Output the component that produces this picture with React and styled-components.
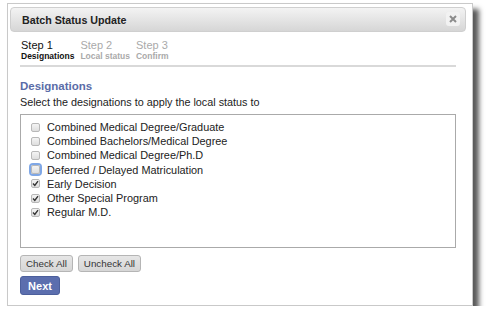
import { createGlobalStyle, styled } from "styled-components";

const designations = [
  { label: "Combined Medical Degree/Graduate", checked: false },
  { label: "Combined Bachelors/Medical Degree", checked: false },
  { label: "Combined Medical Degree/Ph.D", checked: false },
  { label: "Deferred / Delayed Matriculation", checked: false, focused: true },
  { label: "Early Decision", checked: true },
  { label: "Other Special Program", checked: true },
  { label: "Regular M.D.", checked: true },
];

const steps = [
  { num: "Step 1", name: "Designations", active: true },
  { num: "Step 2", name: "Local status" },
  { num: "Step 3", name: "Confirm" },
];

function App() {
  return (
    <>
      <GlobalStyle />
      <Dialog>
        <TitleBar>
          Batch Status Update
          <Close>
            <svg width="8" height="8" viewBox="0 0 8 8">
              <path d="M1 1 L7 7 M7 1 L1 7" stroke="#8c8c8c" strokeWidth="2" />
            </svg>
          </Close>
        </TitleBar>
        <Body>
          <Steps>
            {steps.map((s) => (
              <Step key={s.num} $active={s.active}>
                <StepNum>{s.num}</StepNum>
                <StepName>{s.name}</StepName>
              </Step>
            ))}
          </Steps>
          <Divider />
          <Heading>Designations</Heading>
          <Intro>Select the designations to apply the local status to</Intro>
          <ListBox>
            {designations.map((d) => (
              <Row key={d.label}>
                <Box $focused={d.focused}>
                  {d.checked && (
                    <svg width="7" height="7" viewBox="0 0 7 7">
                      <path d="M1 3.6 L2.8 5.4 L6 1.2" fill="none" stroke="#333" strokeWidth="1.4" />
                    </svg>
                  )}
                </Box>
                {d.label}
              </Row>
            ))}
          </ListBox>
          <ButtonRow>
            <SmallButton>Check All</SmallButton>
            <SmallButton>Uncheck All</SmallButton>
          </ButtonRow>
          <NextButton>Next</NextButton>
        </Body>
      </Dialog>
    </>
  );
}

const GlobalStyle = createGlobalStyle`
  body {
    margin: 0;
    background: #fff;
    font-family: "Liberation Sans", Arial, sans-serif;
    color: #222;
  }
`

const Dialog = styled.div`
  box-sizing: border-box;
  margin: 3px 0 0 7px;
  width: 466px;
  height: 303px;
  background: #fff;
  border: 1px solid #c9c9c9;
  padding: 3px 6px 0 2px;
  box-shadow: 6px 6px 5px rgba(0, 0, 0, 0.65);
`

const TitleBar = styled.div`
  position: relative;
  box-sizing: border-box;
  height: 25px;
  display: flex;
  align-items: center;
  padding-left: 11px;
  border: 1px solid #cfcfcf;
  border-radius: 4px;
  background: linear-gradient(#f3f3f3, #d6d6d6);
  font-size: 10.7px;
  font-weight: bold;
  color: #222;
`

const Close = styled.span`
  position: absolute;
  right: 5px;
  top: 4px;
  width: 14px;
  height: 14px;
  border-radius: 3px;
  background: #f2f2f2;
  display: flex;
  align-items: center;
  justify-content: center;
`

const Body = styled.div`
  padding: 7px 10px 0 10px;
`

const Steps = styled.div`
  display: flex;
  gap: 6px;
  padding-left: 1px;
`

const Step = styled.div`
  display: flex;
  flex-direction: column;
  color: ${(p) => (p.$active ? "#111" : "#aaa")};
`

const StepNum = styled.span`
  font-size: 11px;
  line-height: 12px;
`

const StepName = styled.span`
  font-size: 8.5px;
  font-weight: bold;
  line-height: 10px;
`

const Divider = styled.div`
  margin-top: 4px;
  height: 2px;
  background: #d9d9d9;
`

const Heading = styled.div`
  margin-top: 12px;
  font-size: 11.5px;
  font-weight: bold;
  color: #5a6ca8;
  line-height: 14px;
`

const Intro = styled.div`
  margin-top: 3px;
  font-size: 10.8px;
  line-height: 13px;
`

const ListBox = styled.div`
  box-sizing: border-box;
  margin-top: 5px;
  height: 134px;
  border: 1px solid #aaa;
  padding: 5px 0 0 10px;
`

const Row = styled.div`
  display: flex;
  align-items: center;
  gap: 7px;
  height: 14.2px;
  font-size: 10.9px;
`

const Box = styled.span`
  box-sizing: border-box;
  width: 9px;
  height: 9px;
  display: flex;
  align-items: center;
  justify-content: center;
  border: 1px solid #b8b8b8;
  border-radius: 2px;
  background: linear-gradient(#f4f4f4, #dedede);
  box-shadow: ${(p) => (p.$focused ? "0 0 0 2px #7fa7e6" : "none")};
`

const ButtonRow = styled.div`
  display: flex;
  gap: 5px;
  margin-top: 7px;
`

const SmallButton = styled.button`
  height: 17px;
  padding: 0 5px;
  border: 1px solid #b5b5b5;
  border-radius: 3px;
  background: linear-gradient(#e6e6e6, #d6d6d6);
  font-family: "Liberation Sans", Arial, sans-serif;
  font-size: 9.8px;
  color: #333;
`

const NextButton = styled.button`
  display: block;
  margin-top: 4px;
  width: 40px;
  height: 19px;
  padding: 0;
  border: 1px solid #4c5f9c;
  border-radius: 3px;
  background: #5b6eae;
  font-family: "Liberation Sans", Arial, sans-serif;
  font-size: 11px;
  font-weight: bold;
  color: #fff;
`

export default App;
